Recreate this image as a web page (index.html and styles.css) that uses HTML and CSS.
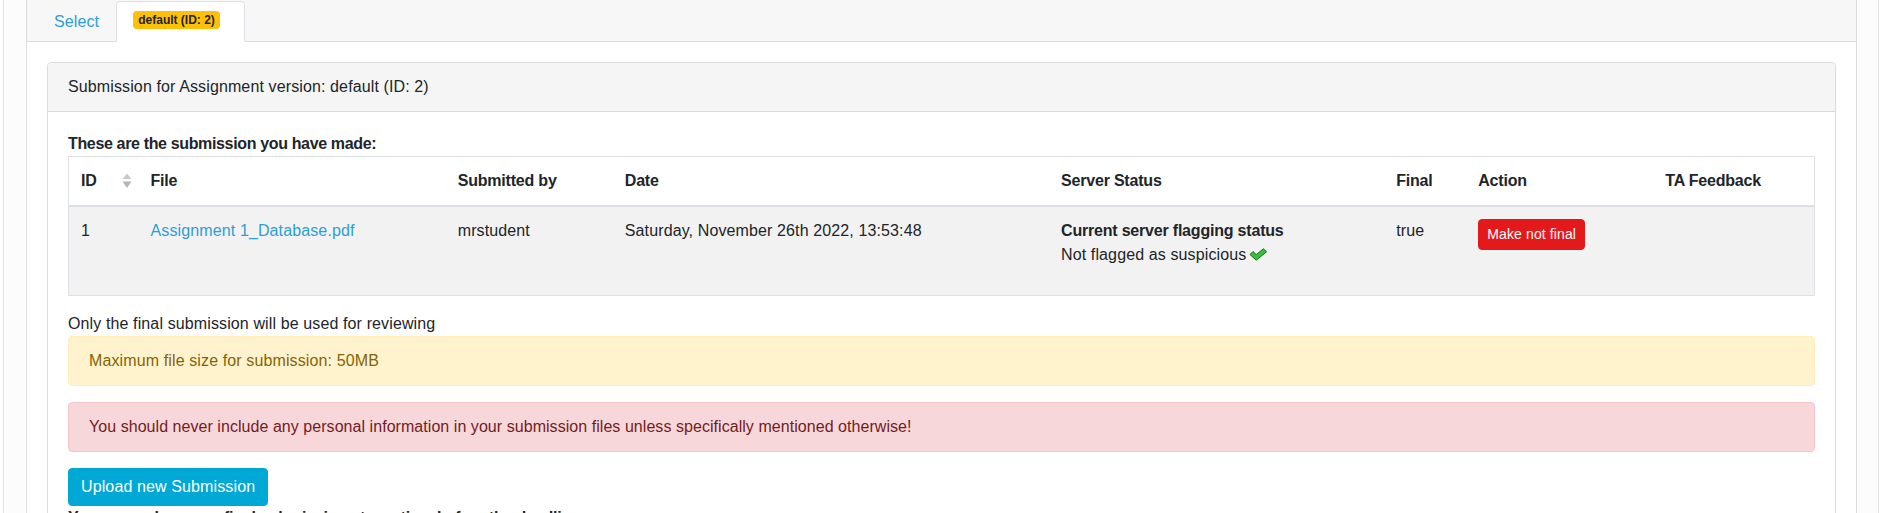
FILE: index.html
```html
<!DOCTYPE html>
<html lang="en">
<head>
<meta charset="utf-8">
<title>Submission</title>
<link rel="stylesheet" href="styles.css">
</head>
<body>
<div class="page">
  <div class="tabs-card">
    <div class="tabs-header">
      <ul class="nav-tabs">
        <li class="nav-item"><a class="nav-link" href="#">Select</a></li>
        <li class="nav-item"><a class="nav-link active" href="#"><span class="badge">default (ID: 2)</span></a></li>
      </ul>
    </div>
    <div class="tabs-body">
      <div class="card">
        <div class="card-header">Submission for Assignment version: default (ID: 2)</div>
        <div class="card-body">
          <div class="heading">These are the submission you have made:</div>
          <table class="table">
            <colgroup>
              <col class="c-id"><col class="c-file"><col class="c-by"><col class="c-date"><col class="c-status"><col class="c-final"><col class="c-action"><col class="c-fb">
            </colgroup>
            <thead>
              <tr>
                <th class="th-sort"><span class="sort-wrap">ID<svg class="sort-icon" width="10" height="16" viewBox="0 0 10 16"><path d="M5 0.5 L9.5 6 L0.5 6 Z" fill="#c9c9c9"/><path d="M0.5 8.5 L9.5 8.5 L5 15 Z" fill="#b5b5b5"/></svg></span></th>
                <th>File</th>
                <th>Submitted by</th>
                <th>Date</th>
                <th>Server Status</th>
                <th>Final</th>
                <th>Action</th>
                <th>TA Feedback</th>
              </tr>
            </thead>
            <tbody>
              <tr>
                <td>1</td>
                <td><a class="link" href="#">Assignment 1_Database.pdf</a></td>
                <td>mrstudent</td>
                <td>Saturday, November 26th 2022, 13:53:48</td>
                <td>
                  <div class="status">
                    <div class="status-title">Current server flagging status</div>
                    <div>Not flagged as suspicious<svg class="check" width="19" height="13" viewBox="0 0 19 13"><path d="M1 6.5 L4 3.5 L7.2 6.6 L14.5 0.8 L17.6 3.8 L7.2 12.2 Z" fill="#35c135" stroke="#1d6b1d" stroke-width="1" stroke-linejoin="round"/></svg></div>
                  </div>
                </td>
                <td>true</td>
                <td><button class="btn btn-danger">Make not final</button></td>
                <td></td>
              </tr>
            </tbody>
          </table>
          <div class="note">Only the final submission will be used for reviewing</div>
          <div class="alert alert-warning">Maximum file size for submission: 50MB</div>
          <div class="alert alert-danger">You should never include any personal information in your submission files unless specifically mentioned otherwise!</div>
          <button class="btn-upload">Upload new Submission</button>
          <div class="after">You can make a new final submission at any time before the deadline</div>
        </div>
      </div>
    </div>
  </div>
</div>
</body>
</html>
```

FILE: styles.css
```css
* { box-sizing: border-box; }

html, body {
  margin: 0;
  padding: 0;
  background: #ffffff;
  font-family: "Liberation Sans", Arial, sans-serif;
  font-size: 16px;
  line-height: 24px;
  letter-spacing: 0.12px;
  color: #212529;
  overflow: hidden;
}

.page {
  margin-left: 3px;
  width: 1876px;
  border-left: 1px solid #e3e3e3;
  border-right: 1px solid #e3e3e3;
  background: #fcfcfc;
  padding: 0 21px 0 22px;
  min-height: 600px;
}

.tabs-card {
  border: 1px solid #dcdcdc;
  border-top: none;
  background: #ffffff;
}

.tabs-header {
  background: #f7f7f7;
  border-bottom: 1px solid #dcdcdc;
  padding: 1px 0 0 10px;
}

.nav-tabs {
  list-style: none;
  margin: 0 0 -1px 0;
  padding: 0;
  display: flex;
}

.nav-link {
  display: block;
  padding: 8px 16px 7px 16px;
  border: 1px solid transparent;
  border-top-left-radius: 4px;
  border-top-right-radius: 4px;
  color: #2c9fd8;
  text-decoration: none;
  line-height: 24px;
}

.nav-link.active {
  background: #ffffff;
  border-color: #dee2e6 #dee2e6 #ffffff;
  width: 129px;
}

.badge {
  display: inline-block;
  background: #ffc107;
  color: #212529;
  font-size: 12px;
  font-weight: 700;
  line-height: 12px;
  letter-spacing: 0;
  padding: 3px 5px;
  border-radius: 4px;
  vertical-align: 3px;
}

.tabs-body {
  padding: 20px;
}

.card {
  border: 1px solid #dcdcdc;
  border-radius: 4px;
  background: #ffffff;
}

.card-header {
  background: #f5f5f5;
  border-bottom: 1px solid #dcdcdc;
  padding: 12px 20px;
  border-radius: 4px 4px 0 0;
}

.card-body {
  padding: 20px 20px 0 20px;
}

.heading {
  font-weight: 700;
  letter-spacing: -0.35px;
}

.table {
  width: 100%;
  table-layout: fixed;
  border-collapse: collapse;
  border: 1px solid #dee2e6;
  margin-bottom: 16px;
}

.c-id { width: 70px; }
.c-file { width: 307px; }
.c-by { width: 167px; }
.c-date { width: 436px; }
.c-status { width: 335px; }
.c-final { width: 82px; }
.c-action { width: 187px; }
.c-fb { width: 161px; }

.table th {
  text-align: left;
  font-weight: 700;
  letter-spacing: -0.2px;
  padding: 12px;
  border-bottom: 2px solid #dee2e6;
  vertical-align: bottom;
  white-space: nowrap;
}

.table th.th-sort {
  padding-right: 7px;
}

.sort-wrap {
  display: flex;
  justify-content: space-between;
  align-items: center;
}

.sort-icon {
  display: block;
}

.table td {
  padding: 12px;
  vertical-align: top;
  background: #f2f2f2;
  white-space: nowrap;
}

.link {
  color: #2c9fd8;
  text-decoration: none;
}

.status {
  padding-bottom: 16px;
}

.status-title {
  font-weight: 700;
  letter-spacing: -0.2px;
}

.check {
  vertical-align: -1px;
  margin-left: 3px;
}

.btn {
  font-family: inherit;
  letter-spacing: 0.12px;
  border: 1px solid transparent;
  border-radius: 4px;
  cursor: pointer;
}

.btn-danger {
  background: #e3191c;
  border-color: #e3191c;
  color: #ffffff;
  font-size: 14px;
  line-height: 21px;
  padding: 4px 8px;
}

.alert {
  padding: 12px 20px;
  border: 1px solid transparent;
  border-radius: 4px;
  margin-bottom: 16px;
}

.alert-warning {
  background: #fff3cd;
  border-color: #ffeeba;
  color: #856404;
}

.alert-danger {
  background: #f8d7da;
  border-color: #f5c6cb;
  color: #721c24;
  letter-spacing: 0.05px;
}

.btn-upload {
  display: block;
  font-family: inherit;
  font-size: 16px;
  line-height: 24px;
  letter-spacing: 0.12px;
  padding: 6px 12px;
  border: 1px solid #00a8d6;
  border-radius: 4px;
  background: #00a8d6;
  color: #ffffff;
  cursor: pointer;
}

.after {
  font-weight: 700;
  letter-spacing: -0.2px;
}
```
